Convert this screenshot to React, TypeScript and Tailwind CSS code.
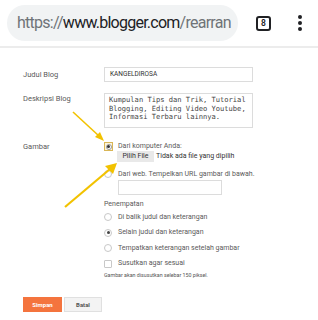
import React from "react";

const Radio = ({ checked = false }: { checked?: boolean }) => (
  <span className="flex h-[8px] w-[8px] shrink-0 items-center justify-center rounded-full border border-[#c8c8c8] bg-white">
    {checked && <span className="h-[3px] w-[3px] rounded-full bg-[#444]" />}
  </span>
);

export default function App() {
  return (
    <div className="relative h-[320px] w-[318px] overflow-hidden bg-white" style={{ fontFamily: "Roboto, 'Liberation Sans', sans-serif" }}>
      {/* top bar */}
      <div className="flex h-[48px] items-center border-b-2 border-[#ececec] pl-[7px]">
        <div className="flex h-[36px] w-[231px] items-center overflow-hidden whitespace-nowrap rounded-full bg-[#f1f3f4] pl-[10px] text-[16px] tracking-[-0.75px]">
          <span className="text-[#6f7378]">https://</span>
          <span className="text-[#202124]">www.blogger.com</span>
          <span className="text-[#6f7378]">/rearran</span>
        </div>
        <div className="ml-[18px] flex h-[15px] w-[15px] items-center justify-center rounded-[3px] border-2 border-[#202124] text-[8.5px] font-semibold text-[#202124]">
          8
        </div>
        <div className="ml-[27px] flex flex-col gap-[2.5px]">
          <span className="h-[3.5px] w-[3.5px] rounded-full bg-[#202124]" />
          <span className="h-[3.5px] w-[3.5px] rounded-full bg-[#202124]" />
          <span className="h-[3.5px] w-[3.5px] rounded-full bg-[#202124]" />
        </div>
      </div>

      {/* form */}
      <div className="pl-[23px] text-[7.5px] leading-[9px] text-[#5a5a5a]">
        <div className="mt-[19px] flex items-center">
          <div className="w-[81px]">Judul Blog</div>
          <div className="flex h-[15px] w-[149px] items-center border border-[#dcdcdc] pl-[5px] text-[6.5px] text-[#333]">
            KANGELDIROSA
          </div>
        </div>

        <div className="mt-[11px] flex items-start">
          <div className="mt-[1px] w-[81px]">Deskripsi Blog</div>
          <div
            className="h-[35px] w-[149px] border border-[#dcdcdc] pl-[4px] pt-[2px] text-[7.1px] leading-[8.5px] text-[#444]"
            style={{ fontFamily: "'DejaVu Sans Mono', monospace" }}
          >
            Kumpulan Tips dan Trik, Tutorial
            <br />
            Blogging, Editing Video Youtube,
            <br />
            Informasi Terbaru lainnya.
          </div>
        </div>

        <div className="mt-[14px] flex items-start">
          <div className="w-[81px]">Gambar</div>
          <div className="flex flex-col text-[7px]">
            <div className="flex h-[9px] items-center">
              <span className="flex h-[9px] w-[9px] items-center justify-center border border-[#d9b656] bg-[#fbf3dc]">
                <span className="flex h-[6px] w-[6px] items-center justify-center rounded-full border border-[#999] bg-white">
                  <span className="h-[2.5px] w-[2.5px] rounded-full bg-[#333]" />
                </span>
              </span>
              <span className="ml-[5px]">Dari komputer Anda:</span>
            </div>
            <div className="ml-[13px] flex items-center">
              <span className="flex h-[11px] w-[37px] items-center justify-center bg-[#e9e9e9] text-[7px] text-[#333]">Pilih File</span>
              <span className="ml-[2px] text-[#333]">Tidak ada file yang dipilih</span>
            </div>
            <div className="mt-[7.5px] flex h-[9px] items-center">
              <Radio />
              <span className="ml-[6px]">Dari web. Tempelkan URL gambar di bawah.</span>
            </div>
            <div className="ml-[14px] mt-[1.5px] h-[15px] w-[104px] border border-[#dcdcdc]" />
            <div className="mt-[4.5px] h-[9px]">Penempatan</div>
            <div className="mt-[4px] flex flex-col gap-[6.5px]">
              <div className="flex h-[9px] items-center">
                <Radio />
                <span className="ml-[6px]">Di balik judul dan keterangan</span>
              </div>
              <div className="flex h-[9px] items-center">
                <Radio checked />
                <span className="ml-[6px]">Selain judul dan keterangan</span>
              </div>
              <div className="flex h-[9px] items-center">
                <Radio />
                <span className="ml-[6px]">Tempatkan keterangan setelah gambar</span>
              </div>
              <div className="flex h-[9px] items-center">
                <span className="h-[8px] w-[8px] shrink-0 rounded-[1px] border border-[#c8c8c8]" />
                <span className="ml-[6px]">Susutkan agar sesuai</span>
              </div>
            </div>
            <div className="mt-[4px] h-[7px] text-[5.3px] leading-[7px] text-[#555]">Gambar akan disusutkan selebar 150 piksel.</div>
          </div>
        </div>

        <div className="mt-[18px] flex gap-[2px]">
          <div className="flex h-[15px] w-[39px] items-center justify-center bg-[#f4743e] text-[6px] font-bold text-white">Simpan</div>
          <div className="flex h-[15px] w-[38px] items-center justify-center border border-[#e0e0e0] bg-[#f3f3f3] text-[6px] font-bold text-[#555]">Batal</div>
        </div>
      </div>

      {/* arrows overlay */}
      <svg className="pointer-events-none absolute left-0 top-0" width="318" height="320" viewBox="0 0 318 320">
        <line x1="73" y1="112" x2="99" y2="136" stroke="#f2c200" strokeWidth="1.6" />
        <polygon points="104,141 95,137 100,132" fill="#f2c200" />
        <line x1="65" y1="207" x2="110" y2="169" stroke="#f2c200" strokeWidth="2.2" />
        <polygon points="117,163 113,174 105,166" fill="#f2c200" />
      </svg>
    </div>
  );
}
